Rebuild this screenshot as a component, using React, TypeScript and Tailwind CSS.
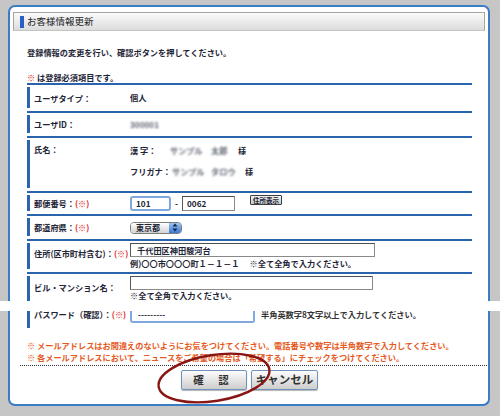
import React from "react";

const LINE = "border-[#2a64ae]";

function Row({ h, children, start }: { h: string; children: React.ReactNode; start?: boolean }) {
  return (
    <div className={`border-t-2 ${LINE} pt-[2px] pb-[3px] ${h}`}>
      <div className={`h-full border-l-[3px] ${LINE} flex ${start ? "items-start" : "items-center"}`}>{children}</div>
    </div>
  );
}

function Label({ children, req, cls = "" }: { children: React.ReactNode; req?: boolean; cls?: string }) {
  return (
    <div className={`w-[100px] shrink-0 pl-[4px] font-bold whitespace-nowrap leading-[12px] ${cls}`}>
      {children}
      {req && <span className="text-[#e0262b]">(※)</span>}
    </div>
  );
}

function Blur({ children, w }: { children: React.ReactNode; w: string }) {
  return <span className={`inline-block ${w} blur-[1.1px] text-[#5f6571] font-bold whitespace-nowrap`}>{children}</span>;
}

function SelectBox() {
  return (
    <div className="flex h-[12px] w-[52px] items-stretch rounded-[4px] border border-[#7d7d7d] overflow-hidden mt-[1px]">
      <div className="flex-1 bg-linear-to-b from-white to-[#d4d4d4] pl-[5px] font-bold leading-[10px] text-[8px]">東京都</div>
      <div className="w-[12px] bg-linear-to-b from-[#9cc1ef] to-[#3b78d1] flex items-center justify-center">
        <svg width="6" height="9" viewBox="0 0 6 9">
          <path d="M3 0.5 L5.5 3.5 H0.5 Z" fill="#10254a" />
          <path d="M3 8.5 L5.5 5.5 H0.5 Z" fill="#10254a" />
        </svg>
      </div>
    </div>
  );
}

export default function App() {
  return (
    <div className="relative w-[500px] h-[416px] overflow-hidden bg-[#c6c6c6] flex flex-col font-['Noto_Sans_CJK_JP','Noto_Sans',sans-serif] text-[8.2px] text-[#1e2536]">
      <div className="h-[5px] shrink-0" />

      {/* upper part of panel */}
      <div className="ml-[8px] mr-[10px] h-[296px] shrink-0 bg-white border-2 border-b-0 border-[#3b7cc7] rounded-t-[7px] flex flex-col overflow-hidden">
        <div className="mt-[5px] mx-[3px] h-[19px] shrink-0 border border-[#a7a59d] border-b-[#c4c4c4] bg-linear-to-b from-[#fbfbfb] to-[#dcdcdc] flex items-center">
          <div className="ml-[6px] w-[4px] h-[12px] bg-[#2a5fc8]" />
          <span className="ml-[3px] text-[9.5px] text-[#222]">お客様情報更新</span>
        </div>

        <div className="mt-[15px] pl-[17px] h-[12px] leading-[12px] font-bold">登録情報の変更を行い、確認ボタンを押してください。</div>
        <div className="mt-[14px] pl-[17px] h-[11px] leading-[11px] font-bold">
          <span className="text-[#e0262b]">※</span> は登録必須項目です。
        </div>

        <div className="ml-[17px] w-[445px]">
          <Row h="h-[28px]">
            <Label>ユーザタイプ：</Label>
            <span className="font-bold">個人</span>
          </Row>
          <Row h="h-[25px]">
            <Label>ユーザID：</Label>
            <Blur w="w-[30px]">300001</Blur>
          </Row>
          <Row h="h-[55px]" start>
            <Label cls="mt-[3px]">氏名：</Label>
            <div className="mt-[4px] flex flex-col gap-[9px] leading-[12px] font-bold">
              <div className="flex">
                <span className="w-[40px]">漢 字：</span>
                <Blur w="w-[33px]">サンプル</Blur>
                <span className="ml-[8px]"><Blur w="w-[18px]">太郎</Blur></span>
                <span className="ml-[9px]">様</span>
              </div>
              <div className="flex">
                <span className="w-[42px]">フリガナ：</span>
                <Blur w="w-[30px]">サンプル</Blur>
                <span className="ml-[9px]"><Blur w="w-[26px]">タロウ</Blur></span>
                <span className="ml-[8px]">様</span>
              </div>
            </div>
          </Row>
          <Row h="h-[23px]">
            <Label req>郵便番号：</Label>
            <div className="flex items-center">
              <div className="w-[41px] h-[15px] border-2 border-[#7fa9de] rounded-[3px] pl-[4px] leading-[11px] font-bold">101</div>
              <span className="mx-[4px] font-bold">-</span>
              <div className="w-[53px] h-[15px] border border-[#8a8a8a] border-t-[#4d4d4d] border-l-[#5a5a5a] pl-[4px] leading-[13px] font-bold">0062</div>
              <div className="ml-[15px] -mt-[6px] h-[10px] px-[2px] border border-[#3d3d3d] rounded-[1px] bg-linear-to-b from-[#f6f6f6] to-[#c9c9c9] text-[6.5px] leading-[8px] font-bold">住所表示</div>
            </div>
          </Row>
          <Row h="h-[25px]">
            <Label req>都道府県：</Label>
            <SelectBox />
          </Row>
          <Row h="h-[33px]" start>
            <Label cls="mt-[4px]" req>住所(区市町村含む)：</Label>
            <div className="flex flex-col">
              <div className="w-[245px] h-[14px] border border-[#8a8a8a] border-t-[#4f4f4f] border-l-[#5a5a5a] pl-[6px] leading-[12px] font-bold">千代田区神田駿河台</div>
              <div className="mt-[1px] leading-[11px] font-bold whitespace-nowrap">例)〇〇市〇〇〇町１－１－１　 ※全て全角で入力ください。</div>
            </div>
          </Row>
          <div className={`border-t-2 ${LINE} pt-[2px] h-[40px]`}>
            <div className={`h-full border-l-[3px] ${LINE} flex items-start`}>
              <Label cls="mt-[5px]">ビル・マンション名：</Label>
              <div className="flex flex-col">
                <div className="w-[243px] h-[14px] border border-[#8a8a8a] border-t-[#4f4f4f] border-l-[#5a5a5a]" />
                <div className="leading-[10px] font-bold">※全て全角で入力ください。</div>
              </div>
            </div>
          </div>
        </div>
      </div>

      {/* torn band */}
      <div className="h-[10px] shrink-0 bg-white" />

      {/* lower part of panel */}
      <div className="ml-[8px] mr-[10px] h-[95px] shrink-0 bg-white border-2 border-t-0 border-[#3b7cc7] rounded-b-[7px] flex flex-col">
        <div className="ml-[17px] w-[445px] h-[17px] border-l-[3px] border-[#2a64ae] flex items-start">
          <div className="w-[100px] shrink-0 pl-[4px] h-[10px] overflow-hidden">
            <div className="-mt-[3px] leading-[12px] font-bold whitespace-nowrap">
              パスワード（確認）：<span className="text-[#e0262b]">(※)</span>
            </div>
          </div>
          <div className="w-[125px] h-[12px] border-2 border-t-0 border-[#7fa9de] rounded-b-[3px] pl-[6px] leading-[6px] font-bold overflow-hidden">
            ---------
          </div>
          <div className="ml-[6px] h-[9px] overflow-hidden">
            <div className="-mt-[3px] leading-[12px] font-bold whitespace-nowrap text-[#333]">半角英数字8文字以上で入力してください。</div>
          </div>
        </div>

        <div className="mt-[11px] pl-[17px] leading-[12px] font-bold text-[#e65a1e] whitespace-nowrap">
          <div>※ メールアドレスはお間違えのないようにお気をつけてください。電話番号や数字は半角数字で入力してください。</div>
          <div>※ 各メールアドレスにおいて、ニュースをご希望の場合は「希望する」にチェックをつけてください。</div>
        </div>

        <div className="mt-[2px] ml-[10px] mr-[1px] border-t border-dotted border-[#333]" />

        <div className="mt-[4px] ml-[171px] flex gap-[4px]">
          <button className="w-[66px] h-[20px] border border-[#6f91bb] rounded-[2px] bg-linear-to-b from-[#fdfdfd] to-[#cdcdcd] shadow-[0_1px_1px_rgba(0,0,0,0.3)] text-[10.5px] font-bold text-[#333] tracking-[6px]">
            確 認
          </button>
          <button className="w-[67px] h-[20px] border border-[#6f91bb] rounded-[2px] bg-linear-to-b from-[#fdfdfd] to-[#cdcdcd] shadow-[0_1px_1px_rgba(0,0,0,0.3)] text-[11.5px] font-bold text-[#333]">
            キャンセル
          </button>
        </div>
      </div>

      <div className="flex-1" />

      <svg className="absolute left-0 top-0 pointer-events-none" width="500" height="416" viewBox="0 0 500 416">
        <ellipse cx="214" cy="378" rx="56" ry="23" transform="rotate(-9 214 378)" fill="none" stroke="#8a1515" strokeWidth="2.4" />
      </svg>
    </div>
  );
}
